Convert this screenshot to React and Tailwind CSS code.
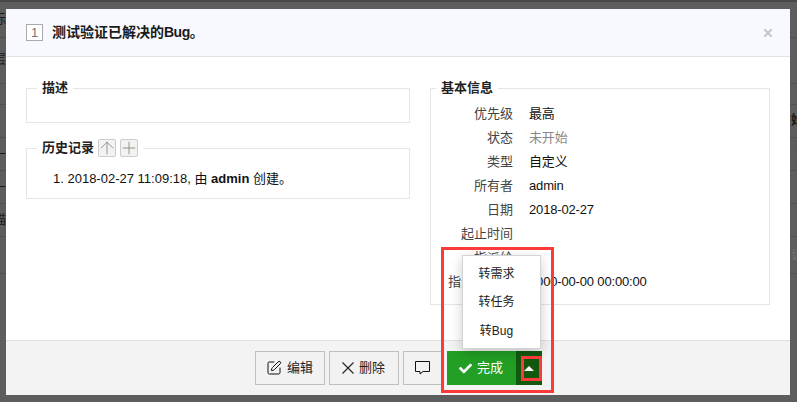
import { Plus, ArrowUp, SquarePen, X } from "lucide-react";
import { FaCheck } from "react-icons/fa";

const bgRows = [
  { h: "h-[36px]", left: "标", top: "pt-[8px]" },
  { h: "h-[46px]", left: "层", top: "pt-[12px]" },
  { h: "h-[21px]" },
  { h: "h-[33px]", right: "始", rightBold: true, top: "pt-[6px]" },
  { h: "h-[33px]", left: "一", right: "]:", top: "pt-[7px]" },
  { h: "h-[33px]", left: "一", top: "pt-[7px]" },
  { h: "h-[33px]", left: "描", top: "pt-[7px]" },
  { h: "h-[37px]", right: "误", top: "pt-[9px]" },
];

const infoRows = [
  { label: "优先级", value: "最高", cls: "text-[#111]" },
  { label: "状态", value: "未开始", cls: "text-[#888]" },
  { label: "类型", value: "自定义", cls: "text-[#111]" },
  { label: "所有者", value: "admin", cls: "text-[#111]" },
  { label: "日期", value: "2018-02-27", cls: "text-[#111]" },
  { label: "起止时间", value: "", cls: "" },
  { label: "指派给", value: "", cls: "" },
  { label: "指派给日期", value: "0000-00-00 00:00:00", cls: "text-[#111]" },
];

const Backdrop = () => (
  <div className="flex flex-col border-t-2 border-[#484848]">
    {bgRows.map((row, i) => (
      <div
        key={i}
        className={`${row.h} ${row.top || ""} flex justify-between border-b border-[#505050] text-[13px] leading-[18px] text-[#1b1b1b] overflow-hidden`}
      >
        <span className="-ml-[7px]">{row.left}</span>
        <span className={`-mr-[7px] ${row.rightBold ? "font-bold" : ""} ${row.right === "误" ? "text-[#777]" : ""}`}>
          {row.right}
        </span>
      </div>
    ))}
  </div>
);

const SmallBtn = ({ children }) => (
  <span className="w-[18px] h-[18px] flex items-center justify-center border border-[#ccc] rounded-[2px] bg-[#f2f2f2] text-[#8a8279]">
    {children}
  </span>
);

const FooterBtn = ({ children, w }) => (
  <button className={`${w} h-[34px] flex items-center justify-center gap-[5px] border border-[#bfbfbf] bg-[#f2f2f2] text-[13px] text-[#222]`}>
    {children}
  </button>
);

export default function App() {
  return (
    <div
      className="relative w-[797px] h-[402px] overflow-hidden bg-[#5d5d5d]"
      style={{ fontFamily: '"Liberation Sans", "Noto Sans CJK SC", sans-serif' }}
    >
      <Backdrop />

      <div className="absolute left-[6px] top-[9px] w-[784px] h-[386px] flex flex-col bg-white">
        <div className="h-[48px] shrink-0 flex items-center bg-[#f8f9fe] border-b border-[#e3e3e3] pl-[20px] pr-[16px]">
          <span className="w-[17px] h-[17px] flex items-center justify-center border border-[#aaa] bg-white text-[13px] leading-none text-[#777]">
            1
          </span>
          <h1 className="ml-[9px] text-[14px] font-bold text-[#1a1a1a]">
            测试验证已解决的<span className="tracking-[-0.5px]">Bug</span>。
          </h1>
          <X className="ml-auto text-[#c8c8c8]" size={12} strokeWidth={4.5} />
        </div>

        <div className="flex-1 flex gap-[20px] px-[20px] pt-[21px]">
          <div className="w-[384px] flex flex-col gap-[16px]">
            <fieldset className="h-[45px] border border-[#e5e5e5] px-[15px]">
              <legend className="px-[5px] ml-[-5px] text-[13px] leading-[20px] font-bold text-[#222]">描述</legend>
            </fieldset>
            <fieldset className="h-[60px] border border-[#e5e5e5] px-[15px]">
              <legend className="px-[5px] ml-[-5px] flex items-center gap-[4px] text-[13px] leading-[18px] font-bold text-[#222]">
                历史记录
                <SmallBtn>
                  <ArrowUp size={20} strokeWidth={1} className="shrink-0" />
                </SmallBtn>
                <SmallBtn>
                  <Plus size={20} strokeWidth={1} className="shrink-0" />
                </SmallBtn>
              </legend>
              <ol className="pl-[11px] pt-[12px] text-[13px] leading-[20px] text-[#111]">
                <li>
                  1. 2018-02-27 11:09:18, 由 <b>admin</b> 创建。
                </li>
              </ol>
            </fieldset>
          </div>

          <fieldset className="w-[340px] h-[227px] border border-[#e5e5e5] px-[10px]">
            <legend className="px-[5px] ml-[-5px] text-[13px] leading-[20px] font-bold text-[#222]">基本信息</legend>
            <div className="pt-[4px] flex flex-col">
              {infoRows.map((row) => (
                <div key={row.label} className="h-[24px] flex items-center text-[13px]">
                  <span className="w-[72px] shrink-0 whitespace-nowrap flex justify-end text-[#444]">{row.label}</span>
                  <span className={`ml-[16px] tracking-[-0.16px] ${row.cls}`}>{row.value}</span>
                </div>
              ))}
            </div>
          </fieldset>
        </div>

        <div className="h-[55px] shrink-0 flex items-start justify-center gap-[4px] pt-[10px] bg-[#f3f3f3] border-t border-[#e0e0e0]">
          <FooterBtn w="w-[70px]">
            <SquarePen size={16} strokeWidth={1.5} className="text-[#111]" />
            编辑
          </FooterBtn>
          <FooterBtn w="w-[70px]">
            <svg width="12" height="12" viewBox="0 0 12 12" stroke="#222" strokeWidth="1.1" fill="none">
              <path d="M0.5 0.5L11.5 11.5M11.5 0.5L0.5 11.5" />
            </svg>
            删除
          </FooterBtn>
          <FooterBtn w="w-[40px]">
            <svg width="15" height="14" viewBox="0 0 15 14" stroke="#111" strokeWidth="1" fill="none">
              <path d="M0.5 0.5H14.5V10.5H8L5 13V10.5H0.5Z" />
            </svg>
          </FooterBtn>

          <div className="relative flex h-[34px]">
            <button className="w-[69px] flex items-center justify-center gap-[5px] bg-[#229f24] text-[13px] text-white">
              <FaCheck size={13} />
              完成
            </button>
            <button className="w-[26px] flex items-center justify-center bg-[#12590f]">
              <svg width="10" height="5" viewBox="0 0 10 5">
                <path d="M5 0L10 5H0Z" fill="#fff" />
              </svg>
            </button>

            <div className="absolute right-[1px] bottom-[36px] w-[79px] h-[94px] flex flex-col pt-[4px] pr-[9px] bg-white border border-[#d4d4d4] shadow-[0_4px_12px_rgba(0,0,0,0.2)] text-[12px] text-[#222]">
              <span className="h-[28px] flex items-center justify-center">转需求</span>
              <span className="h-[28px] flex items-center justify-center">转任务</span>
              <span className="h-[29px] flex items-center justify-center">转Bug</span>
            </div>
          </div>
        </div>
      </div>

      <div className="absolute left-[441px] top-[247px] w-[113px] h-[146px] border-[3px] border-[#fb3a3a]" />
      <div className="absolute left-[521px] top-[356px] w-[21px] h-[25px] border-[3px] border-[#fb3a3a]" />
    </div>
  );
}
